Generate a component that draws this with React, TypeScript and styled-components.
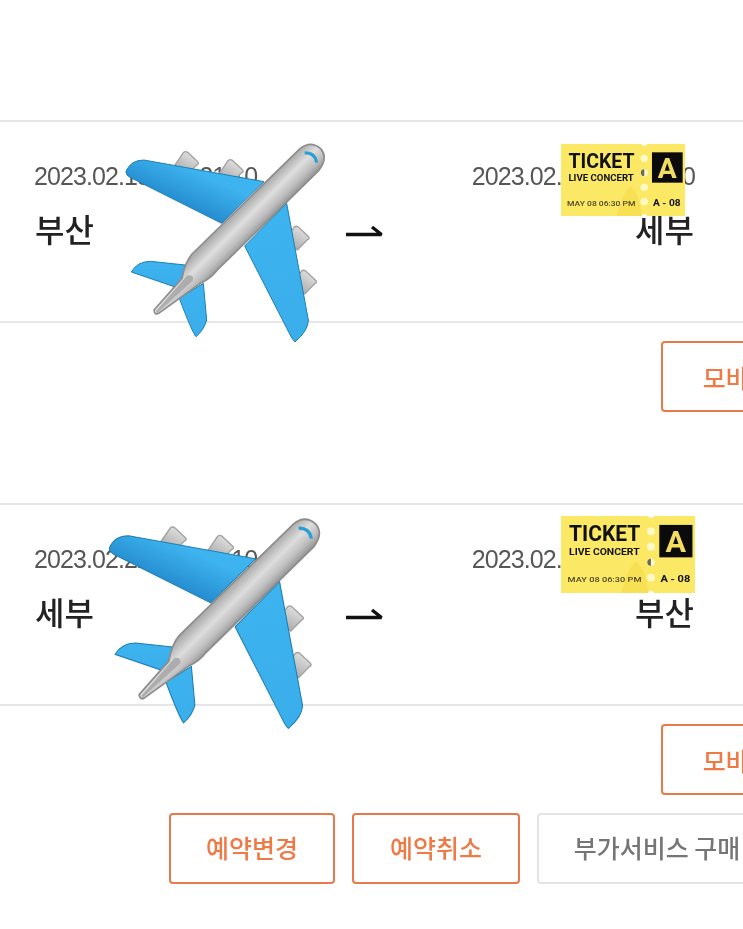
import React from "react";
import styled, { createGlobalStyle } from "styled-components";

const Global = createGlobalStyle`
  html, body { margin: 0; padding: 0; background: #fff; }
  body { width: 743px; height: 929px; overflow: hidden; }
  #root { width: 743px; height: 929px; overflow: hidden; }
`;

const Page = styled.div`
  position: relative;
  width: 743px;
  height: 929px;
  overflow: hidden;
  padding-top: 120px;
  box-sizing: border-box;
  font-family: "Liberation Sans", "Noto Sans CJK KR", sans-serif;
  filter: blur(0.5px);
`;

const Segment = styled.section`
  margin-bottom: 91px;
`;

const Route = styled.div`
  height: 199px;
  border-top: 2px solid #e6e6e6;
  border-bottom: 2px solid #e6e6e6;
  box-sizing: content-box;
  padding: 0 48px 0 34px;
  display: flex;
  justify-content: space-between;
  align-items: flex-start;
`;

const Stop = styled.div<{ $end?: boolean }>`
  display: flex;
  flex-direction: column;
  align-items: ${(p) => (p.$end ? "flex-end" : "flex-start")};
  padding-top: 39px;
`;

const DateText = styled.div`
  font-size: 25px;
  line-height: 30px;
  letter-spacing: -0.9px;
  color: #575757;
  white-space: nowrap;
`;

const City = styled.div<{ $end?: boolean }>`
  margin-top: 18px;
  margin-left: ${(p) => (p.$end ? 0 : 1)}px;
  margin-right: ${(p) => (p.$end ? 1 : 0)}px;
  font-family: "Noto Sans CJK KR", sans-serif;
  font-size: 32px;
  line-height: 38px;
  font-weight: 500;
  color: #222;
`;

const ArrowWrap = styled.svg`
  width: 38px;
  height: 14px;
  margin-top: 102px;
  flex: none;
`;

const Actions = styled.div<{ $left: number }>`
  display: flex;
  gap: 17px;
  padding-left: ${(p) => p.$left}px;
  margin-top: 18px;
  width: 1100px;
`;

const ActionButton = styled.button<{ $muted?: boolean; $w: number; $raised?: boolean }>`
  flex: none;
  width: ${(p) => p.$w}px;
  height: 71px;
  box-sizing: border-box;
  padding: 0 0 ${(p) => (p.$raised ? 4 : 0)}px;
  background: #fff;
  border: 2px solid ${(p) => (p.$muted ? "#e4e4e4" : "#e8794a")};
  border-radius: 4px;
  color: ${(p) => (p.$muted ? "#757575" : "#ef7a45")};
  font-family: "Noto Sans CJK KR", sans-serif;
  font-size: 25px;
  font-weight: 500;
  white-space: nowrap;
`;

const OverlayArt = styled.svg<{ $x: number; $y: number; $w: number; $h: number }>`
  position: absolute;
  left: ${(p) => p.$x}px;
  top: ${(p) => p.$y}px;
  width: ${(p) => p.$w}px;
  height: ${(p) => p.$h}px;
`;

function Arrow() {
  return (
    <ArrowWrap viewBox="0 0 38 14">
      <path d="M0 10.5H35.5L26 3" fill="none" stroke="#111" strokeWidth="3.4" strokeLinejoin="bevel" />
    </ArrowWrap>
  );
}

function Engine({ x, y, fill }: { x: number; y: number; fill: string }) {
  return (
    <path
      transform={`translate(${x} ${y})`}
      d="M-34 34 L-8 -4 Q-2 -10 5 -5 L36 24 Q40 30 32 33 L2 64 Z"
      fill={fill}
      stroke="#a3a3a3"
      strokeWidth="4"
      strokeLinejoin="round"
    />
  );
}

function Plane({ id, x, y, w, h }: { id: string; x: number; y: number; w: number; h: number }) {
  const engine = `url(#${id}-engine)`;
  const wing = `url(#${id}-wing)`;
  return (
    <OverlayArt viewBox="0 0 720 660" $x={x} $y={y} $w={w} $h={h}>
      <defs>
        <linearGradient id={`${id}-body`} gradientUnits="userSpaceOnUse" x1="438" y1="214" x2="505" y2="281">
          <stop offset="0" stopColor="#a8a8a8" />
          <stop offset="0.4" stopColor="#dedede" />
          <stop offset="0.7" stopColor="#bfbfbf" />
          <stop offset="1" stopColor="#8a8a8a" />
        </linearGradient>
        <linearGradient id={`${id}-wing`} gradientUnits="objectBoundingBox" x1="0.5" y1="0" x2="0.62" y2="1">
          <stop offset="0" stopColor="#3db3ef" />
          <stop offset="1" stopColor="#39aeeb" />
        </linearGradient>
        <linearGradient id={`${id}-shade`} gradientUnits="userSpaceOnUse" x1="300" y1="130" x2="250" y2="240">
          <stop offset="0" stopColor="#3db3ef" />
          <stop offset="1" stopColor="#2389cc" />
        </linearGradient>
        <linearGradient id={`${id}-engine`} x1="0.8" y1="0" x2="0.2" y2="1">
          <stop offset="0" stopColor="#e6e6e6" />
          <stop offset="1" stopColor="#a4a4a4" />
        </linearGradient>
      </defs>
      <Engine x={258} y={72} fill={engine} />
      <Engine x={392} y={96} fill={engine} />
      <Engine x={590} y={296} fill={engine} />
      <Engine x={612} y={428} fill={engine} />
      <path
        d="M78 124 Q92 90 132 90 L492 155 L365 280 L90 142 Q76 134 78 124 Z"
        fill={`url(#${id}-shade)`}
        stroke="#1f7fb0"
        strokeWidth="3"
      />
      <path
        d="M560 220 L625 570 Q626 600 585 636 Q576 628 566 606 L434 348 Z"
        fill={wing}
        stroke="#1f7fb0"
        strokeWidth="3"
      />
      <path
        d="M94 426 Q112 394 152 394 L256 405 L240 476 L94 426 Z"
        fill={wing}
        stroke="#1f7fb0"
        strokeWidth="3"
      />
      <path
        d="M310 460 L320 570 Q312 600 288 620 Q276 606 238 505 Z"
        fill={wing}
        stroke="#1f7fb0"
        strokeWidth="3"
      />
      <path
        d="M600 56 Q632 30 662 56 Q686 84 656 122 L352 420 Q332 446 304 458 L176 550 Q164 556 162 540 L246 445 Q254 398 276 372 Z"
        fill={`url(#${id}-body)`}
        stroke="#8d8d8d"
        strokeWidth="5"
        strokeLinejoin="round"
      />
      <path d="M168 544 L262 436 Q284 434 278 452 L172 548 Z" fill="#adadad" />
      <path d="M614 68 Q646 68 650 98" fill="none" stroke="#2a9fd6" strokeWidth="9" />
    </OverlayArt>
  );
}

function Ticket({ x, y, w, h, dark }: { x: number; y: number; w: number; h: number; dark: number }) {
  const holes = [43, 86, 130, 173];
  return (
    <OverlayArt viewBox="0 0 368 216" preserveAspectRatio="none" $x={x} $y={y} $w={w} $h={h}>
      <path d="M0 0H238 Q247 12 256 0H368V216H256 Q247 204 238 216H0Z" fill="#fbe865" />
      <path d="M165 216 Q185 140 207 126 Q232 150 240 216 Z" fill="#f8e055" />
      {holes.map((cy, i) => (
        <g key={cy}>
          <circle cx="247" cy={cy} r="11" fill="#fff9c8" />
          {i === dark && <path d={`M247 ${cy - 10} A10 10 0 0 0 247 ${cy + 10} Z`} fill="#6b6a55" />}
        </g>
      ))}
      <rect x="270" y="25" width="91" height="91" fill="#0b0b0b" />
      <text x="315.5" y="101" textAnchor="middle" fontFamily="Roboto, sans-serif" fontWeight="700" fontSize="84" fill="#f2dd60">A</text>
      <g fontFamily="Roboto, sans-serif" fill="#111">
        <text x="22" y="71" fontWeight="700" fontSize="60" textLength="196" lengthAdjust="spacingAndGlyphs">TICKET</text>
        <text x="22" y="110" fontWeight="700" fontSize="25" textLength="194" lengthAdjust="spacingAndGlyphs">LIVE CONCERT</text>
        <text x="18" y="186" fontWeight="500" fontSize="20" fill="#4f4a2a" textLength="203" lengthAdjust="spacingAndGlyphs">MAY 08  06:30 PM</text>
        <text x="273" y="186" fontWeight="700" fontSize="25" textLength="82" lengthAdjust="spacingAndGlyphs">A - 08</text>
      </g>
    </OverlayArt>
  );
}

export default function App() {
  return (
    <Page>
      <Global />
      <Segment>
        <Route>
          <Stop>
            <DateText>2023.02.18 (토) 21:10</DateText>
            <City>부산</City>
          </Stop>
          <Arrow />
          <Stop $end>
            <DateText>2023.02.18 (토) 06:30</DateText>
            <City $end>세부</City>
          </Stop>
        </Route>
        <Actions $left={661}>
          <ActionButton $w={227}>모바일 탑승권</ActionButton>
        </Actions>
      </Segment>
      <Segment>
        <Route>
          <Stop>
            <DateText>2023.02.22 (수) 21:10</DateText>
            <City>세부</City>
          </Stop>
          <Arrow />
          <Stop $end>
            <DateText>2023.02.22 (수) 06:30</DateText>
            <City $end>부산</City>
          </Stop>
        </Route>
        <Actions $left={661}>
          <ActionButton $w={227}>모바일 탑승권</ActionButton>
        </Actions>
        <Actions $left={169}>
          <ActionButton $w={166} $raised>예약변경</ActionButton>
          <ActionButton $w={168} $raised>예약취소</ActionButton>
          <ActionButton $w={240} $raised $muted>부가서비스 구매</ActionButton>
        </Actions>
      </Segment>
      <Plane id="p1" x={100} y={130} w={240} h={220} />
      <Plane id="p2" x={82} y={504} w={254} h={233} />
      <Ticket x={561} y={144} w={124} h={72} dark={1} />
      <Ticket x={561} y={516} w={134} h={77} dark={2} />
    </Page>
  );
}
